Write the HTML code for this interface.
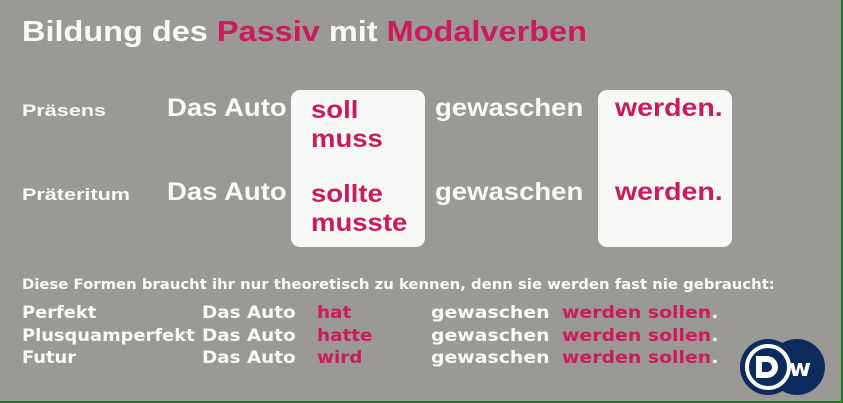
<!DOCTYPE html>
<html><head><meta charset="utf-8"><style>
body{margin:0;width:843px;height:403px;overflow:hidden;background:#9a9996;position:relative;font-family:"Liberation Sans",sans-serif;font-weight:bold;color:#fafaf8}
.a{position:absolute;white-space:nowrap;line-height:1;transform-origin:left top}
.p{color:#cc1a5c}
.box{position:absolute;background:#f8f8f6;border-radius:9px;top:90px;height:157px}
.c{transform:scaleX(1.1)}
.l{transform:scaleX(1.27)}
.s{font-family:"DejaVu Sans",sans-serif;transform:scaleX(1.08)}
</style></head><body>
<div style="position:absolute;right:0;top:0;width:2px;height:403px;background:#1a7a1a"></div>
<div style="position:absolute;left:0;bottom:0;width:843px;height:2px;background:#1a7a1a"></div>
<div class="a" style="left:22px;top:18px;font-size:29px;transform:scaleX(1.12)">Bildung des <span class="p">Passiv</span> mit <span class="p">Modalverben</span></div>
<div class="box" style="left:291px;width:134px"></div>
<div class="box" style="left:598px;width:134px"></div>
<div class="a l" style="left:22px;top:102px;font-size:17px">Präsens</div>
<div class="a l" style="left:22px;top:186px;font-size:17px">Präteritum</div>
<div class="a c" style="left:167px;top:96px;font-size:25px">Das Auto</div>
<div class="a c" style="left:167px;top:180px;font-size:25px">Das Auto</div>
<div class="a c p" style="left:311px;top:96px;font-size:25px;line-height:29px">soll<br>muss</div>
<div class="a c p" style="left:311px;top:180px;font-size:25px;line-height:29px">sollte<br>musste</div>
<div class="a c" style="left:435px;top:96px;font-size:25px">gewaschen</div>
<div class="a c" style="left:435px;top:180px;font-size:25px">gewaschen</div>
<div class="a c p" style="left:615px;top:96px;font-size:25px;transform:scaleX(1.14)">werden.</div>
<div class="a c p" style="left:615px;top:180px;font-size:25px;transform:scaleX(1.14)">werden.</div>
<div class="a s" style="left:22px;top:278px;font-size:14px;transform:scaleX(1.06)">Diese Formen braucht ihr nur theoretisch zu kennen, denn sie werden fast nie gebraucht:</div>
<div class="a s" style="left:22px;top:302px;font-size:17px;line-height:22.5px;transform:scaleX(1.05)">Perfekt<br>Plusquamperfekt<br>Futur</div>
<div class="a s" style="left:202px;top:302px;font-size:17px;line-height:22.5px">Das Auto<br>Das Auto<br>Das Auto</div>
<div class="a s p" style="left:317px;top:302px;font-size:17px;line-height:22.5px">hat<br>hatte<br>wird</div>
<div class="a s" style="left:431px;top:302px;font-size:17px;line-height:22.5px;transform:scaleX(1.11)">gewaschen<br>gewaschen<br>gewaschen</div>
<div class="a s" style="left:562px;top:302px;font-size:17px;line-height:22.5px;transform:scaleX(1.11)"><span class="p">werden sollen</span>.<br><span class="p">werden sollen</span>.<br><span class="p">werden sollen</span>.</div>
<svg style="position:absolute;left:738px;top:339px" width="90" height="56">
<circle cx="59" cy="28" r="28" fill="#0d2b5c"/>
<circle cx="30" cy="28" r="28" fill="#0d2b5c"/>
<circle cx="30" cy="28" r="21" fill="none" stroke="#fff" stroke-width="4"/>
<path d="M18 17h11a11 11 0 0 1 0 22h-11z M24 23v10h5a5 5 0 0 0 0-10z" fill="#fff" fill-rule="evenodd"/>
<text x="62" y="37" font-family="DejaVu Sans" font-weight="bold" font-size="24" fill="#fff" text-anchor="middle">w</text>
</svg>
</body></html>
